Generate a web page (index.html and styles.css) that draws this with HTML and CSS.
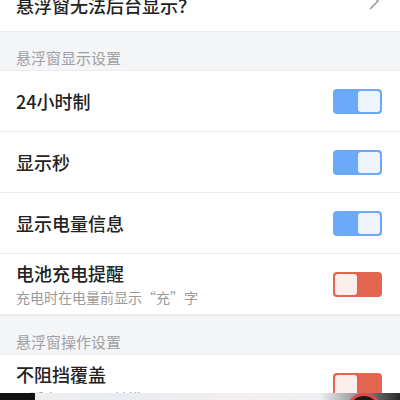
FILE: index.html
```html
<!DOCTYPE html>
<html>
<head>
    <title>悬浮窗设置</title>
    <link rel="stylesheet" href="styles.css">
</head>
<body>
    <div class="page">
        <div class="row row-link">
            <span class="title">悬浮窗无法后台显示？</span>
            <svg class="chevron" width="12" height="20" viewBox="0 0 12 20">
                <path d="M2 2 L10 10 L2 18" fill="none" stroke="#9a9a9a" stroke-width="1.6"/>
            </svg>
        </div>

        <div class="section">悬浮窗显示设置</div>
        <div class="row">
            <span class="title">24小时制</span>
            <span class="switch on"><span class="knob"></span></span>
        </div>
        <div class="row">
            <span class="title">显示秒</span>
            <span class="switch on"><span class="knob"></span></span>
        </div>
        <div class="row">
            <span class="title">显示电量信息</span>
            <span class="switch on"><span class="knob"></span></span>
        </div>
        <div class="row">
            <div class="text">
                <div class="title">电池充电提醒</div>
                <div class="sub">充电时在电量前显示“充”字</div>
            </div>
            <span class="switch off"><span class="knob"></span></span>
        </div>

        <div class="section">悬浮窗操作设置</div>
        <div class="row">
            <div class="text">
                <div class="title">不阻挡覆盖</div>
                <div class="sub">悬浮窗下层不可触摸</div>
            </div>
            <span class="switch off"><span class="knob"></span></span>
        </div>
    </div>

    <div class="bottom-strip">
        <span class="strip-dark"></span>
        <span class="strip-fade"></span>
        <span class="strip-ring"></span>
    </div>
</body>
</html>
```

FILE: styles.css
```css
body {
    margin: 0;
    background: #ffffff;
    font-family: "Noto Sans CJK SC", "Noto Sans", sans-serif;
    color: #222222;
    overflow: hidden;
}
.page {
    margin-top: -30px;
}
.row {
    display: flex;
    align-items: center;
    justify-content: space-between;
    height: 61px;
    box-sizing: border-box;
    padding: 0 18px 0 16px;
    border-bottom: 1px solid #ececee;
    background: #ffffff;
}
.row-link {
    border-bottom: none;
    padding-top: 8px;
    padding-right: 20px;
}
.title {
    font-size: 18px;
    line-height: 22px;
    font-weight: 500;
    color: #222222;
}
.sub {
    margin-top: 3px;
    font-size: 14px;
    line-height: 20px;
    color: #9a9a9a;
}
.text {
    padding-top: 1px;
}
.chevron {
    margin-top: -8px;
}
.section {
    height: 40px;
    box-sizing: border-box;
    padding: 16px 16px 0;
    font-size: 15px;
    line-height: 20px;
    color: #a0a0a4;
    background: #f4f5f7;
    border-top: 1px solid #ececee;
    border-bottom: 1px solid #ececee;
}
.switch {
    display: flex;
    width: 49px;
    height: 25px;
    box-sizing: border-box;
    padding: 2px;
    border-radius: 4px;
}
.switch.on {
    background: #6aaaf8;
    justify-content: flex-end;
}
.switch.off {
    background: #e2654f;
    justify-content: flex-start;
}
.knob {
    width: 22px;
    height: 21px;
    border-radius: 3px;
}
.switch.on .knob {
    background: #eef4fd;
}
.switch.off .knob {
    background: #fbefee;
}
.bottom-strip {
    position: fixed;
    left: 0;
    right: 0;
    bottom: 0;
    height: 7px;
    display: flex;
    background: linear-gradient(90deg, #f2eeee, #e8ecf2 30%, #f4eeee 60%, #eef0f4 80%, #2a2a2a);
    overflow: hidden;
}
.strip-dark {
    width: 35px;
    background: #111111;
}
.strip-fade {
    flex: 1;
}
.strip-ring {
    width: 30px;
    height: 30px;
    margin-right: 18px;
    border: 3px solid #e04a44;
    border-radius: 50%;
    background: #1a1a1a;
}
```
